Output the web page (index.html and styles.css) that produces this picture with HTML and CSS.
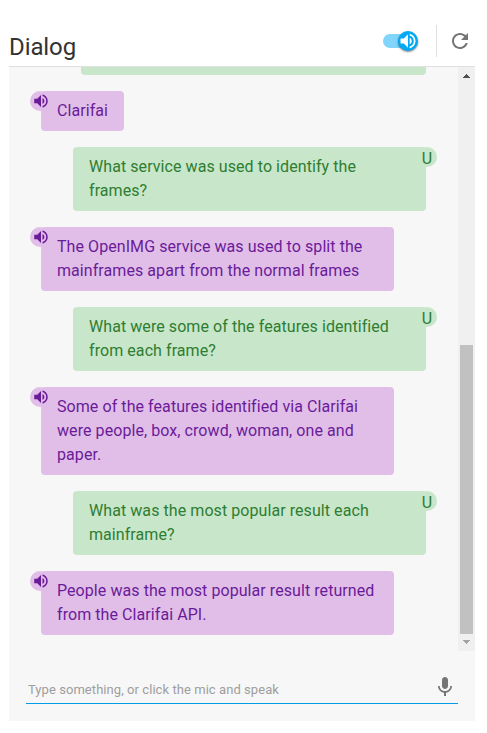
FILE: index.html
```html
<!DOCTYPE html>
<html lang="en">
<head>
<meta charset="utf-8">
<title>Dialog</title>
<link rel="stylesheet" href="styles.css">
</head>
<body>
<svg class="defs" width="0" height="0">
  <symbol id="volume" viewBox="0 0 24 24"><path d="M3 9v6h4l5 5V4L7 9H3zm13.500 3c0-1.770-1.020-3.290-2.500-4.030v8.050c1.480-.73 2.500-2.250 2.500-4.020zM14 3.230v2.060c2.890.86 5 3.540 5 6.710s-2.110 5.850-5 6.710v2.060c4.010-.91 7-4.490 7-8.770s-2.990-7.860-7-8.770z"/></symbol>
</svg>
<main class="dialog">
  <header class="header">
    <h1 class="title">Dialog</h1>
    <div class="toggle"><span class="knob"><svg class="knob-icon"><use href="#volume"/></svg></span></div>
    <div class="refresh"><svg viewBox="0 0 24 24" width="24" height="24"><path d="M17.650 6.350C16.200 4.900 14.210 4 12 4c-4.420 0-7.990 3.580-7.990 8s3.570 8 7.990 8c3.730 0 6.840-2.550 7.730-6h-2.080c-.82 2.330-3.040 4-5.650 4-3.310 0-6-2.690-6-6s2.690-6 6-6c1.660 0 3.140.69 4.220 1.780L13 11h7V4l-2.350 2.350z"/></svg></div>
  </header>
  <section class="panel">
    <div class="history">
      <div class="messages">
        <div class="clipped"></div>
        <div class="bubble bot short">Clarifai<span class="badge"><svg><use href="#volume"/></svg></span></div>
        <div class="bubble user">What service was used to identify the<br>frames?<span class="badge">U</span></div>
        <div class="bubble bot">The OpenIMG service was used to split the<br>mainframes apart from the normal frames<span class="badge"><svg><use href="#volume"/></svg></span></div>
        <div class="bubble user">What were some of the features identified<br>from each frame?<span class="badge">U</span></div>
        <div class="bubble bot">Some of the features identified via Clarifai<br>were people, box, crowd, woman, one and<br>paper.<span class="badge"><svg><use href="#volume"/></svg></span></div>
        <div class="bubble user">What was the most popular result each<br>mainframe?<span class="badge">U</span></div>
        <div class="bubble bot">People was the most popular result returned<br>from the Clarifai API.<span class="badge"><svg><use href="#volume"/></svg></span></div>
      </div>
      <div class="scrollbar">
        <svg class="arrow up" viewBox="0 0 7 4" shape-rendering="crispEdges"><path d="M3 0h1v1h1v1h1v1h1v1H0V3h1V2h1V1h1z"/></svg>
        <div class="thumb"></div>
        <svg class="arrow down" viewBox="0 0 7 4" shape-rendering="crispEdges"><path d="M0 0h7v1H6v1H5v1H4v1H3V3H2V2H1V1H0z"/></svg>
      </div>
    </div>
    <div class="composer">
      <span class="placeholder">Type something, or click the mic and speak</span>
      <svg class="mic" viewBox="0 0 24 24"><path d="M12 14c1.660 0 2.990-1.340 2.990-3L15 5c0-1.660-1.340-3-3-3S9 3.340 9 5v6c0 1.660 1.340 3 3 3zm5.300-3c0 3-2.540 5.100-5.300 5.100S6.700 14 6.700 11H5c0 3.410 2.720 6.230 6 6.720V21h2v-3.280c3.280-.48 6-3.300 6-6.720h-1.700z"/></svg>
    </div>
  </section>
</main>
</body>
</html>
```

FILE: styles.css
```css
* { box-sizing: border-box; }
body { margin: 0; background: #fff; font-family: Roboto, "Liberation Sans", sans-serif; }
svg { display: block; fill: currentColor; }
.defs { position: absolute; }
.dialog { width: 466px; margin-left: 9px; padding-top: 16px; }
.header { display: flex; align-items: center; height: 51px; border-bottom: 1px solid #e0e0e0; }
.title { flex: 1; margin: 12px 0 0; font-size: 24px; line-height: 32px; font-weight: 400; letter-spacing: -.1px; color: #333; }
.toggle { display: flex; align-items: center; justify-content: flex-end; width: 34px; height: 14px; border-radius: 7px; background: #81d4fa; margin-right: 19px; }
.knob { display: grid; place-items: center; flex: none; width: 20px; height: 20px; margin-right: -1px; border-radius: 50%; background: #03a9f4; color: #fff; box-shadow: 0 1px 2px rgba(0, 0, 0, .5); }
.knob-icon { width: 20px; height: 20px; }
.refresh { display: flex; align-items: center; justify-content: flex-end; width: 39px; height: 32px; padding-right: 3px; border-left: 1px solid #e0e0e0; color: #757575; }
.panel { height: 654px; background: #f7f7f7; }
.history { display: flex; height: 584px; }
.messages { flex: 1; display: flex; flex-direction: column; gap: 16px; padding: 0 32px; }
.clipped { width: 345px; height: 8px; margin-left: 40px; background: #c8e6c9; border-radius: 0 0 4px 4px; }
.bubble { position: relative; width: 353px; flex: none; padding: 8px 16px; border-radius: 4px; font-size: 16px; line-height: 24px; letter-spacing: .07px; white-space: nowrap; }
.bot { background: #e1bee7; color: #6a1b9a; }
.user { margin-left: 32px; background: #c8e6c9; color: #2e7d32; }
.short { width: 83px; }
.badge { position: absolute; top: 0; display: grid; place-items: center; width: 20px; height: 20px; border-radius: 50%; background: inherit; font-size: 16px; line-height: 20px; }
.bot .badge { left: -11px; }
.user .badge { right: -11px; padding-top: 2px; }
.badge svg { width: 18px; height: 18px; margin-left: 1px; }
.scrollbar { display: flex; flex-direction: column; align-items: center; width: 17px; background: #f0f0f0; }
.arrow { flex: none; width: 7px; height: 4px; }
.up { margin-top: 7px; color: #505050; }
.down { margin-top: 6px; color: #a3a3a3; }
.thumb { width: 13px; height: 289px; margin-top: 267px; background: #c1c1c1; }
.composer { display: flex; align-items: center; justify-content: space-between; width: 432px; height: 33px; margin: 20px 0 0 17px; padding-left: 2px; border-bottom: 1px solid #039be5; }
.placeholder { margin-top: 5px; font-size: 13px; line-height: 18px; letter-spacing: .06px; color: #9e9e9e; }
.mic { width: 24px; height: 24px; margin-right: 1px; color: #757575; }
```
